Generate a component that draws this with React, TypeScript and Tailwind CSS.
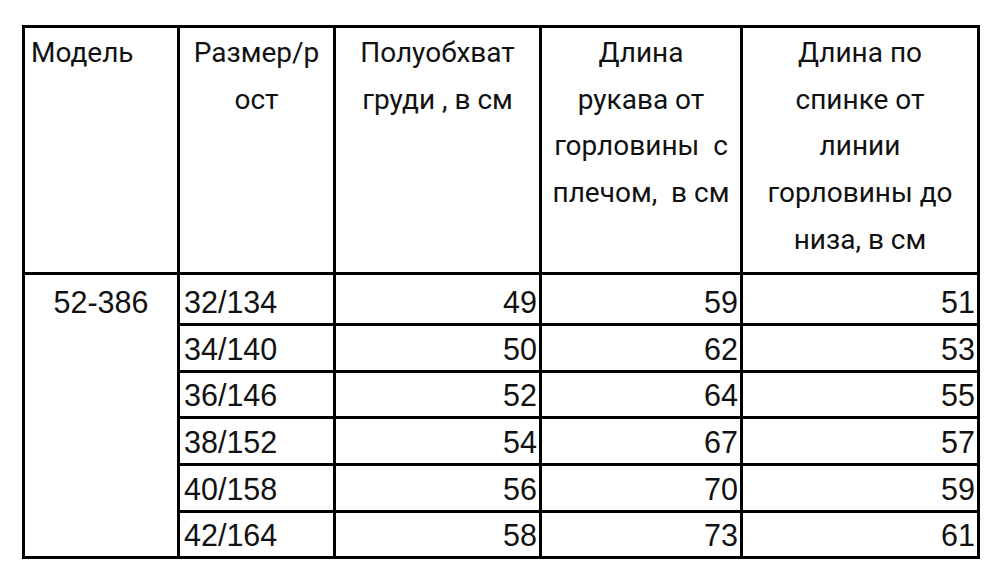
import React from "react";

const rows = [
  ["32/134", "49", "59", "51"],
  ["34/140", "50", "62", "53"],
  ["36/146", "52", "64", "55"],
  ["38/152", "54", "67", "57"],
  ["40/158", "56", "70", "59"],
  ["42/164", "58", "73", "61"],
];

const heights = ["h-[51px]", "h-[47px]", "h-[46px]", "h-[47px]", "h-[47px]", "h-[46px]"];

export default function App() {
  const head = "border-[3px] border-black align-top text-center font-['Roboto',sans-serif] text-[28px] leading-[46.7px] pt-[2px] text-[#111]";
  const num = "border-[3px] border-black text-right align-bottom pr-[2px] pb-[4px] font-['Liberation_Sans',Arial,sans-serif] text-[30.5px] leading-[34px] text-[#111]";
  return (
    <div className="w-[1000px] h-[574px] bg-white pt-[25px] pl-[22px]">
      <table className="table-fixed border-collapse w-[955px]">
        <colgroup>
          <col className="w-[155px]" />
          <col className="w-[156px]" />
          <col className="w-[206px]" />
          <col className="w-[201px]" />
          <col className="w-[237px]" />
        </colgroup>
        <tbody>
          <tr className="h-[247px]">
            <td className={head + " !text-left pl-[6px]"}>Модель</td>
            <td className={head}>Размер/р<br />ост</td>
            <td className={head}>Полуобхват<br />груди , в см</td>
            <td className={head}>Длина<br />рукава от<br />горловины&nbsp; с<br />плечом,&nbsp; в см</td>
            <td className={head}>Длина по<br />спинке от<br />линии<br />горловины до<br />низа, в см</td>
          </tr>
          {rows.map((r, i) => (
            <tr key={i} className={heights[i]}>
              {i === 0 && (
                <td rowSpan={6} className="border-[3px] border-black align-top text-center pt-[10px] font-['Liberation_Sans',Arial,sans-serif] text-[30.5px] leading-[34px] text-[#111]">
                  52-386
                </td>
              )}
              <td className="border-[3px] border-black text-left align-bottom pl-[4px] pb-[4px] font-['Liberation_Sans',Arial,sans-serif] text-[30.5px] leading-[34px] text-[#111]">
                {r[0]}
              </td>
              <td className={num}>{r[1]}</td>
              <td className={num}>{r[2]}</td>
              <td className={num}>{r[3]}</td>
            </tr>
          ))}
        </tbody>
      </table>
    </div>
  );
}
